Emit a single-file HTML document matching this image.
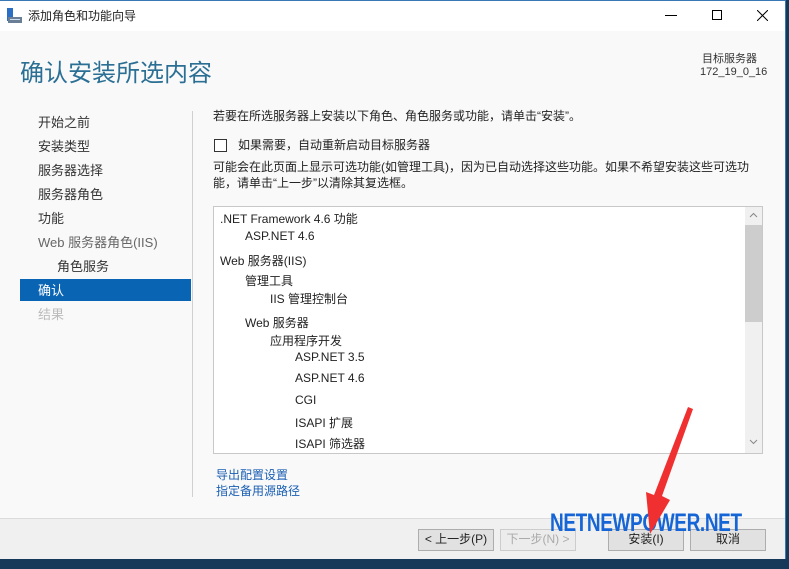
<!DOCTYPE html><html><head><meta charset="utf-8"><style>
*{margin:0;padding:0;box-sizing:border-box}
body{width:789px;height:569px;overflow:hidden;background:#16395a;font-family:"Liberation Sans","Noto Sans CJK SC",sans-serif;position:relative;font-size:12px;color:#222}
.a{position:absolute;white-space:nowrap}
#win{position:absolute;left:0;top:0;width:786px;height:559px;background:#f9f9f9;border-right:1px solid #3a78b5;border-bottom:1px solid #3a78b5;border-top:1px solid #3a78b5}
#tb{position:absolute;left:0;top:0;width:785px;height:30px;background:#fff}
.nav{left:38px;font-size:13px;color:#333}
.btn{position:absolute;top:528px;width:76px;height:22px;border:1px solid #adadad;background:#e1e1e1;font-size:12px;text-align:center;line-height:19px}
.li{font-size:12px;color:#222}
</style></head><body>
<div id="win">
<div id="tb">
<svg class="a" style="left:6px;top:7px" width="17" height="16"><rect x="1" y="0" width="6" height="13" fill="#2a6fc4"/><rect x="2" y="9" width="14" height="6" fill="#6a7f95"/><rect x="4" y="11" width="10" height="1" fill="#cde"/></svg>
<div class="a" style="left:28px;top:6px;font-size:12px">添加角色和功能向导</div>
<div class="a" style="left:665px;top:14px;width:12px;height:1px;background:#000"></div>
<div class="a" style="left:712px;top:9px;width:10px;height:10px;border:1px solid #000"></div>
<svg class="a" style="left:757px;top:9px" width="11" height="11"><path d="M0 0L11 11M11 0L0 11" stroke="#000" stroke-width="1"/></svg>
</div>
<div class="a" style="left:20px;top:52px;font-size:24px;color:#2b6f94">确认安装所选内容</div>
<div class="a" style="left:700px;top:52px;font-size:11px;color:#333;text-align:right;width:57px;line-height:13px">目标服务器<br>172_19_0_16</div>
<div class="a nav" style="top:111px">开始之前</div>
<div class="a nav" style="top:135px">安装类型</div>
<div class="a nav" style="top:159px">服务器选择</div>
<div class="a nav" style="top:183px">服务器角色</div>
<div class="a nav" style="top:207px">功能</div>
<div class="a nav" style="top:231px;color:#666">Web 服务器角色(IIS)</div>
<div class="a nav" style="top:255px;left:57px;color:#333">角色服务</div>
<div class="a" style="left:20px;top:278px;width:171px;height:22px;background:#0a64b4"></div>
<div class="a nav" style="top:279px;color:#fff">确认</div>
<div class="a nav" style="top:303px;color:#bbb">结果</div>
<div class="a" style="left:192px;top:110px;width:1px;height:386px;background:#d0d0d0"></div>
<div class="a" style="left:213px;top:106px">若要在所选服务器上安装以下角色、角色服务或功能，请单击“安装”。</div>
<div class="a" style="left:214px;top:138px;width:13px;height:13px;border:1px solid #333;background:#fff"></div>
<div class="a" style="left:238px;top:135px">如果需要，自动重新启动目标服务器</div>
<div class="a" style="left:213px;top:158px;line-height:16px">可能会在此页面上显示可选功能(如管理工具)，因为已自动选择这些功能。如果不希望安装这些可选功<br>能，请单击“上一步”以清除其复选框。</div>
<div class="a" style="left:213px;top:205px;width:550px;height:248px;background:#fff;border:1px solid #c8c8c8"></div>
<div class="a" style="left:745px;top:206px;width:17px;height:246px;background:#f0f0f0"></div>
<div class="a" style="left:745px;top:224px;width:17px;height:97px;background:#cdcdcd"></div>
<svg class="a" style="left:749px;top:211px" width="9" height="6"><path d="M1 5L4.5 1.5L8 5" stroke="#888" fill="none"/></svg>
<svg class="a" style="left:749px;top:438px" width="9" height="6"><path d="M1 1L4.5 4.5L8 1" stroke="#888" fill="none"/></svg>
<div class="a li" style="left:220px;top:209px">.NET Framework 4.6 功能</div>
<div class="a li" style="left:245px;top:228px">ASP.NET 4.6</div>
<div class="a li" style="left:220px;top:251px">Web 服务器(IIS)</div>
<div class="a li" style="left:245px;top:271px">管理工具</div>
<div class="a li" style="left:270px;top:289px">IIS 管理控制台</div>
<div class="a li" style="left:245px;top:313px">Web 服务器</div>
<div class="a li" style="left:270px;top:331px">应用程序开发</div>
<div class="a li" style="left:295px;top:349px">ASP.NET 3.5</div>
<div class="a li" style="left:295px;top:370px">ASP.NET 4.6</div>
<div class="a li" style="left:295px;top:392px">CGI</div>
<div class="a li" style="left:295px;top:413px">ISAPI 扩展</div>
<div class="a li" style="left:295px;top:434px">ISAPI 筛选器</div>
<div class="a" style="left:216px;top:465px;color:#1a5fb4">导出配置设置</div>
<div class="a" style="left:216px;top:481px;color:#1a5fb4">指定备用源路径</div>
<div class="a" style="left:0;top:517px;width:785px;height:41px;background:#f0f0f0;border-top:1px solid #dcdcdc"></div>
<div class="btn" style="left:418px">&lt; 上一步(P)</div>
<div class="btn" style="left:500px;color:#aaa;border-color:#ccc;background:#ececec">下一步(N) &gt;</div>
<div class="btn" style="left:608px">安装(I)</div>
<div class="btn" style="left:690px">取消</div>
<div class="a" style="left:550px;top:508px;font-size:25px;font-weight:bold;color:#1565d6;letter-spacing:-0.5px;transform:scaleX(0.76);transform-origin:left">NETNEWPOWER.NET</div>
<svg class="a" style="left:640px;top:405px" width="56" height="130"><path d="M53 3L22 90L30 94L10 128L6 86L14 89L48 1Z" fill="#f03030"/></svg>
</div>
</body></html>
